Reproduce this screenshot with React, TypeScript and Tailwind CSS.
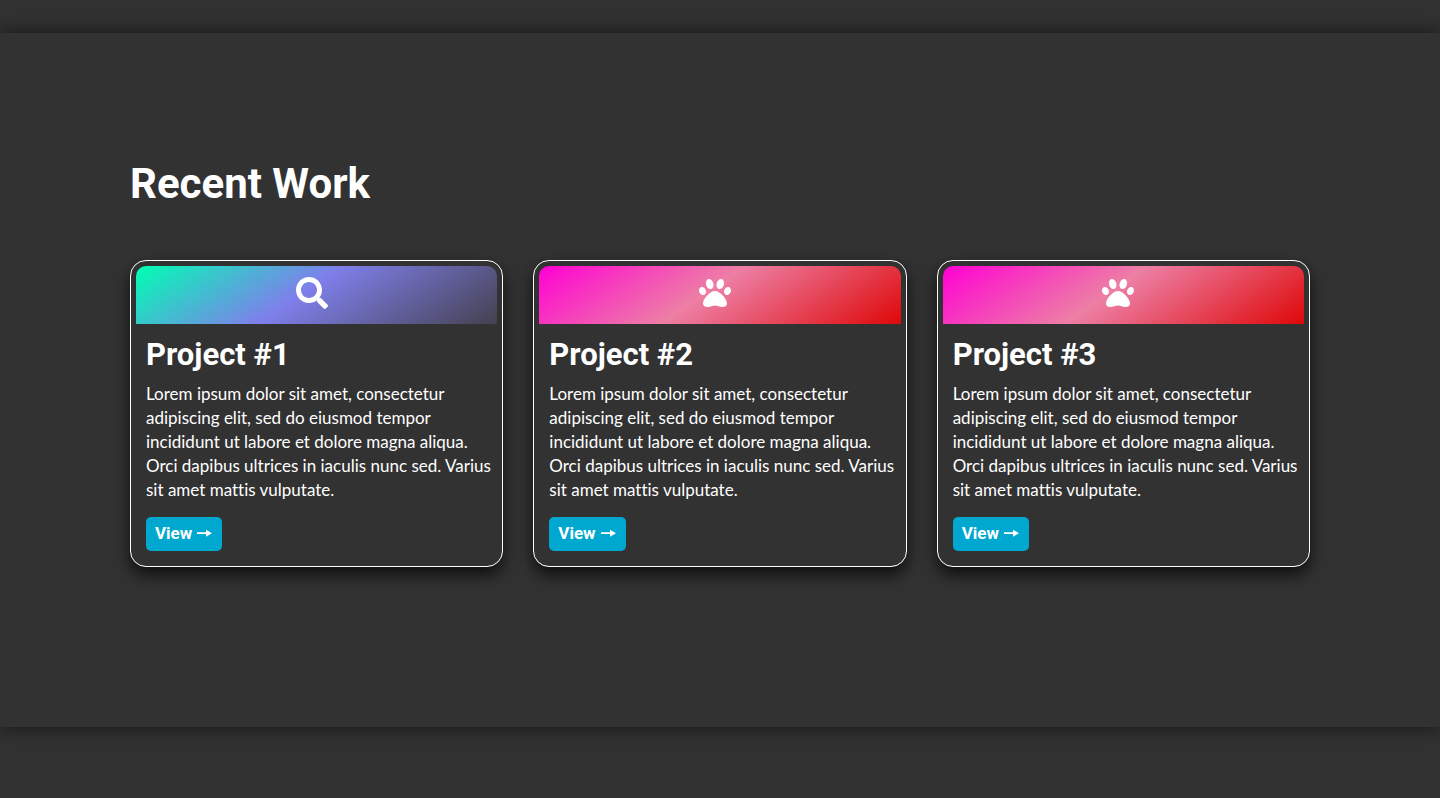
import { FaPaw, FaSearch } from "react-icons/fa";

const projects = [
  {
    title: "Project #1",
    Icon: FaSearch,
    banner: "bg-[linear-gradient(145deg,#00ffb3,#7f7feb_46%,#444150)]",
  },
  {
    title: "Project #2",
    Icon: FaPaw,
    banner: "bg-[linear-gradient(145deg,#ff00d4,#ed7fa5_46%,#de0808)]",
  },
  {
    title: "Project #3",
    Icon: FaPaw,
    banner: "bg-[linear-gradient(145deg,#ff00d4,#ed7fa5_46%,#de0808)]",
  },
];

const summary =
  "Lorem ipsum dolor sit amet, consectetur adipiscing elit, sed do eiusmod tempor incididunt ut labore et dolore magna aliqua. Orci dapibus ultrices in iaculis nunc sed. Varius sit amet mattis vulputate.";

export default function App() {
  return (
    <div className="min-h-screen bg-[#323232] py-[33px] font-['Lato',sans-serif] text-white">
      <main className="bg-[#323232] pt-[121px] pb-40 shadow-[0_0_20px_rgba(0,0,0,0.6)]">
        <div className="mx-auto max-w-[1240px] px-[30px]">
          <h2 className="text-[42px] leading-[60px] font-bold font-['Roboto',sans-serif]">
            Recent Work
          </h2>
          <div className="mt-[46px] grid grid-cols-1 gap-[30px] md:grid-cols-3">
            {projects.map(({ title, Icon, banner }) => (
              <article
                key={title}
                className="rounded-2xl border border-white p-[5px] shadow-[0_8px_16px_rgba(0,0,0,0.7)]"
              >
                <div className={`flex h-[58px] justify-center rounded-t-[10px] pt-[11px] pr-[10px] ${banner}`}>
                  <Icon className="size-8" aria-hidden="true" />
                </div>
                <div className="py-[10px] pl-[10px]">
                  <h3 className="text-[31px] leading-[42px] font-bold font-['Roboto',sans-serif]">
                    {title}
                  </h3>
                  <p className="mt-[6px] text-[17px] leading-6 [font-variant-ligatures:none]">
                    {summary}
                  </p>
                  <a
                    href="#"
                    className="mt-[15px] inline-flex h-[34px] items-center gap-1 rounded-[5px] bg-[#00a8cf] px-[9px] align-top text-[17px] font-bold font-['Roboto',sans-serif]"
                  >
                    View
                    <svg
                      className="h-4 w-[17px]"
                      viewBox="0 0 17 16"
                      fill="currentColor"
                      aria-hidden="true"
                    >
                      <path d="M1 6.3h9V3.7L16 7.2l-6 3.5V8.1H1z" />
                    </svg>
                  </a>
                </div>
              </article>
            ))}
          </div>
        </div>
      </main>
    </div>
  );
}
